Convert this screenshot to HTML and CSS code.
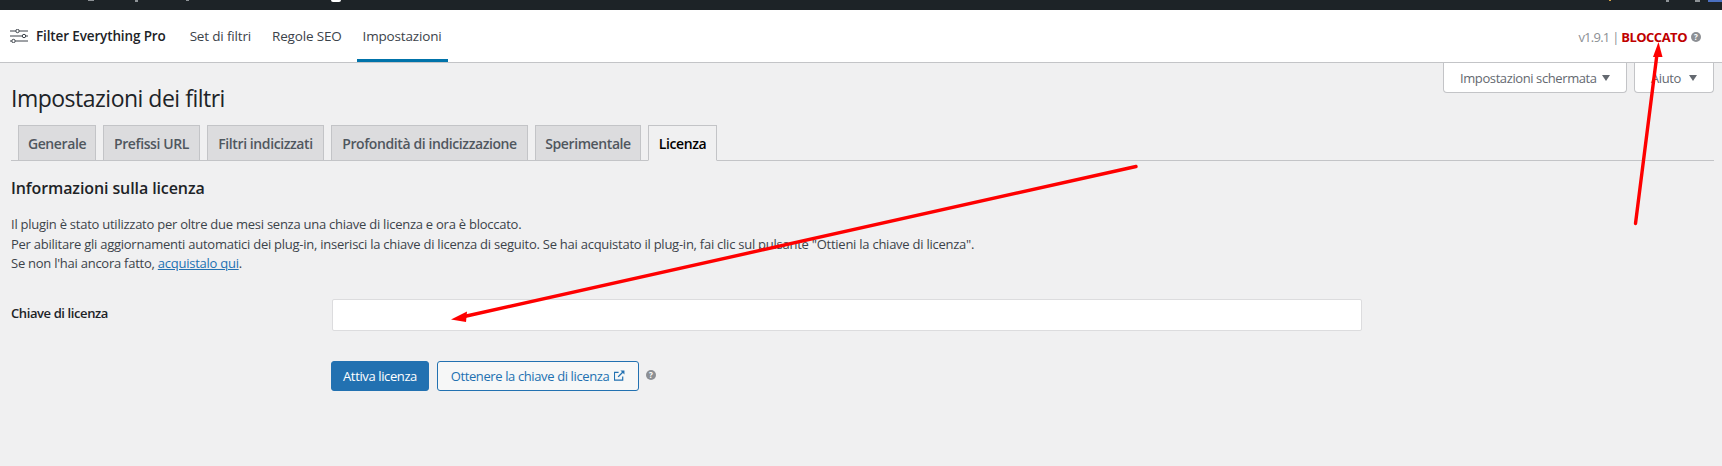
FILE: index.html
```html
<!DOCTYPE html>
<html lang="it">
<head>
<meta charset="utf-8">
<title>Impostazioni dei filtri</title>
<link rel="stylesheet" href="styles.css">
</head>
<body>
<div class="adminbar">
  <i class="bit b1"></i><i class="bit b2"></i><i class="bit b3"></i><i class="bit b4"></i><i class="bit b5"></i><i class="bit b6"></i><i class="bit b7"></i><i class="bit b8"></i>
</div>
<header class="topnav">
  <svg class="logo" viewBox="0 0 18 14" width="18" height="14" aria-hidden="true">
    <g fill="none" stroke="#3c434a" stroke-width="1">
      <path d="M0 2h5.800M9.200 2H18M0 7h12.300M15.700 7H18M0 12h1.800M5.200 12H18"/>
      <circle cx="7.500" cy="2" r="1.700"/><circle cx="14" cy="7" r="1.700"/><circle cx="3.500" cy="12" r="1.700"/>
    </g>
  </svg>
  <strong class="brand">Filter Everything Pro</strong>
  <nav class="navlinks">
    <a class="navlink">Set di filtri</a>
    <a class="navlink">Regole SEO</a>
    <a class="navlink current">Impostazioni</a>
  </nav>
  <div class="status">
    <span class="version">v1.9.1 | </span><strong class="locked">BLOCCATO</strong>
    <span class="help small">?</span>
  </div>
</header>
<div class="metalinks">
  <button class="metabtn screen">Impostazioni schermata<i class="caret"></i></button>
  <button class="metabtn aiuto">Aiuto<i class="caret"></i></button>
</div>
<main class="wrap">
  <h1 class="title">Impostazioni dei filtri</h1>
  <div class="tabs">
    <a class="tab t1">Generale</a>
    <a class="tab t2">Prefissi URL</a>
    <a class="tab t3">Filtri indicizzati</a>
    <a class="tab t4">Profondità di indicizzazione</a>
    <a class="tab t5">Sperimentale</a>
    <a class="tab active">Licenza</a>
  </div>
  <h2 class="section">Informazioni sulla licenza</h2>
  <p class="intro">Il plugin è stato utilizzato per oltre due mesi senza una chiave di licenza e ora è bloccato.<br>
  Per abilitare gli aggiornamenti automatici dei plug-in, inserisci la chiave di licenza di seguito. Se hai acquistato il plug-in, fai clic sul pulsante "Ottieni la chiave di licenza".<br>
  Se non l'hai ancora fatto, <a class="link">acquistalo qui</a>.</p>
  <div class="field">
    <label class="label" for="key">Chiave di licenza</label>
    <input class="input" id="key" type="text">
  </div>
  <div class="actions">
    <button class="btn primary">Attiva licenza</button>
    <button class="btn secondary">Ottenere la chiave di licenza
      <svg class="ext" viewBox="0 0 12 12" width="11" height="11" aria-hidden="true">
        <path d="M9.500 7v4h-9V2.500H5" fill="none" stroke="#2271b1" stroke-width="1.300"/>
        <path d="M4.500 7.500 10 2" fill="none" stroke="#2271b1" stroke-width="1.500"/>
        <path d="M7 .6h4.400V5z" fill="#2271b1"/>
      </svg>
    </button>
    <span class="help">?</span>
  </div>
</main>
<svg class="arrows" viewBox="0 0 1722 466" width="1722" height="466" aria-hidden="true">
  <path d="M1136 166.500 462 317" stroke="#fe0000" stroke-width="3.400" stroke-linecap="round" fill="none"/>
  <path d="M451 319.500 467 311.500 466 322z" fill="#fe0000"/>
  <path d="M1635.500 223.500 1657 54" stroke="#fe0000" stroke-width="3.400" stroke-linecap="round" fill="none"/>
  <path d="M1658.500 42 1653 57 1662.500 57z" fill="#fe0000"/>
</svg>
</body>
</html>
```
FILE: styles.css
```css
* { box-sizing: border-box; }
html, body { margin: 0; padding: 0; height: 466px; overflow: hidden; }
body { background: #f0f0f1; color: #3c434a; font-family: "Open Sans", "Noto Sans", sans-serif; font-size: 13px; position: relative; }
.adminbar { height: 10px; background: #1d2327; position: relative; }
.bit { position: absolute; top: 0; height: 1px; background: #8d9296; }
.b1 { left: 88px; width: 6px; }
.b2 { left: 135px; width: 3px; height: 2px; }
.b3 { left: 186px; width: 3px; }
.b4 { left: 331px; width: 10px; height: 2px; background: #fff; border-radius: 0 0 5px 5px; }
.b5 { left: 1609px; width: 2px; background: #d9a441; }
.b6 { left: 1666px; width: 3px; height: 2px; }
.b7 { left: 1695px; width: 5px; height: 2px; }
.b8 { left: 1708px; width: 14px; height: 2px; background: #4a6fc0; }
.topnav { height: 53px; background: #fff; border-bottom: 1px solid #c3c4c7; display: flex; align-items: center; padding: 0 21px 0 10px; }
.logo { flex: none; margin-right: 8px; }
.brand { font-size: 13.500px; font-weight: 600; color: #1d2327; letter-spacing: -0.13px; white-space: nowrap; margin-right: 18px; }
.navlinks { display: flex; height: 100%; }
.navlink { display: flex; align-items: center; padding: 3px 6px 0; margin-right: 9px; font-size: 13.500px; letter-spacing: -0.17px; color: #3c434a; border-bottom: 3px solid transparent; white-space: nowrap; }
.navlink.current { border-bottom-color: #0073aa; }
.status { margin-left: auto; display: flex; align-items: center; font-size: 13px; letter-spacing: -0.75px; white-space: pre; padding-top: 2px; }
.version { color: #8c8f94; }
.locked { color: #c00000; font-weight: 700; letter-spacing: -0.5px; }
.help { display: inline-flex; align-items: center; justify-content: center; width: 10px; height: 10px; border-radius: 50%; background: #8c8f94; color: #fff; font-size: 8px; font-weight: 700; line-height: 1; letter-spacing: 0; margin-left: 4px; }
.metalinks { position: absolute; top: 63px; right: 8px; display: flex; gap: 7px; }
.metabtn { height: 30px; background: #fff; border: 1px solid #c3c4c7; border-top: 0; border-radius: 0 0 4px 4px; color: #646970; font: 13px "Open Sans", sans-serif; letter-spacing: -0.4px; padding: 0 16px; display: flex; align-items: center; justify-content: space-between; white-space: nowrap; }
.metabtn.screen { width: 184px; }
.metabtn.aiuto { width: 80px; }
.caret { width: 0; height: 0; border-left: 4px solid transparent; border-right: 4px solid transparent; border-top: 6px solid #646970; }
.wrap { padding: 0 8px 0 11px; }
.title { margin: 0; padding-top: 20px; height: 62px; font-size: 23px; font-weight: 400; line-height: 30px; color: #1d2327; letter-spacing: -0.5px; }
.tabs { display: flex; gap: 7px; height: 36px; border-bottom: 1px solid #c3c4c7; padding-left: 7px; }
.tab { height: 36px; background: #dcdcde; border: 1px solid #c3c4c7; color: #50575e; font-size: 14px; font-weight: 600; letter-spacing: -0.4px; display: flex; align-items: center; justify-content: center; white-space: nowrap; }
.t1 { width: 78px; } .t2 { width: 97px; } .t3 { width: 117px; } .t4 { width: 197px; } .t5 { width: 106px; }
.tab.active { width: 69px; background: #f0f0f1; border-bottom-color: #f0f0f1; color: #000; }
.section { margin: 16px 0 0; font-size: 16px; line-height: 22px; font-weight: 600; color: #1d2327; letter-spacing: -0.1px; }
.intro { margin: 16px 0 0; font-size: 13px; line-height: 19.500px; color: #3c434a; letter-spacing: -0.25px; white-space: nowrap; }
.link { color: #2271b1; text-decoration: underline; }
.field { display: flex; align-items: center; margin-top: 25px; }
.label { width: 321px; padding-bottom: 3px; font-size: 13px; font-weight: 600; color: #1d2327; letter-spacing: -0.4px; }
.input { width: 1030px; height: 32px; background: #fff; border: 1px solid #dcdcde; border-radius: 2px; padding: 0 8px; outline: none; }
.actions { display: flex; align-items: center; margin: 30px 0 0 320px; }
.btn { height: 30px; border-radius: 3px; border: 1px solid #2271b1; font: 13px "Open Sans", sans-serif; letter-spacing: -0.38px; padding: 0; display: flex; align-items: center; justify-content: center; white-space: nowrap; }
.primary { width: 98px; background: #2271b1; color: #fff; }
.secondary { width: 202px; margin-left: 8px; background: #f6f7f7; color: #2271b1; gap: 5px; }
.ext { flex: none; }
.actions .help { margin-left: 7px; margin-bottom: 2px; }
.arrows { position: absolute; top: 0; left: 0; pointer-events: none; }
```
